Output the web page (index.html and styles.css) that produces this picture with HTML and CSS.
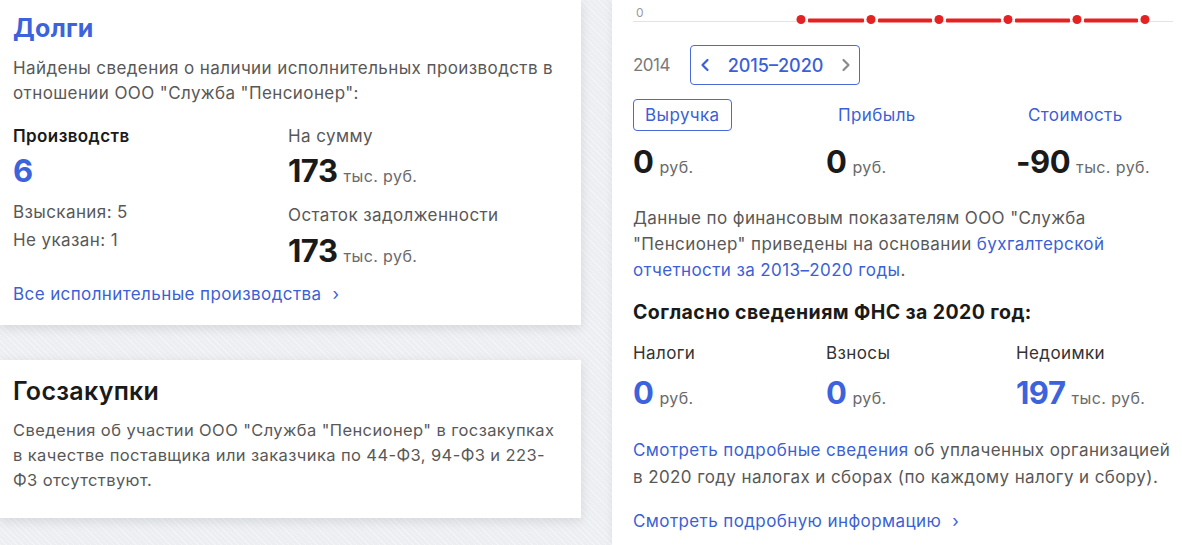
FILE: index.html
```html
<!DOCTYPE html>
<html>
<head>
    <title>Служба Пенсионер</title>
    <link rel="stylesheet" href="styles.css">
</head>
<body>
<div class="page">
    <div class="left">
        <section class="card debts">
            <h2 class="card-title blue">Долги</h2>
            <p class="text">Найдены сведения о наличии исполнительных производств в отношении ООО "Служба "Пенсионер":</p>
            <div class="stats">
                <div class="stat-col">
                    <div class="label bold">Производств</div>
                    <div class="value"><span class="num blue">6</span></div>
                    <div class="note first">Взыскания: 5</div>
                    <div class="note">Не указан: 1</div>
                </div>
                <div class="stat-col">
                    <div class="label">На сумму</div>
                    <div class="value"><span class="num">173</span><span class="unit">тыс. руб.</span></div>
                    <div class="label second">Остаток задолженности</div>
                    <div class="value tight"><span class="num">173</span><span class="unit">тыс. руб.</span></div>
                </div>
            </div>
            <a class="more" href="#">Все исполнительные производства <span class="chev">›</span></a>
        </section>

        <section class="card tenders">
            <h2 class="card-title">Госзакупки</h2>
            <p class="text small">Сведения об участии ООО "Служба "Пенсионер" в госзакупках в качестве поставщика или заказчика по 44-ФЗ, 94-ФЗ и 223-ФЗ отсутствуют.</p>
        </section>
    </div>

    <section class="panel">
        <svg class="chart" width="540" height="28" viewBox="0 0 540 28">
            <text x="3" y="17" font-size="12" fill="#9a9a9a" font-family="Inter, sans-serif">0</text>
            <line x1="0" y1="21.5" x2="540" y2="21.5" stroke="#e3e3e3" stroke-width="1"/>
            <g fill="#e52222">
                <rect x="175" y="18.5" width="56" height="4" rx="1"/>
                <rect x="245" y="18.5" width="54" height="4" rx="1"/>
                <rect x="313" y="18.5" width="55" height="4" rx="1"/>
                <rect x="382" y="18.5" width="55" height="4" rx="1"/>
                <rect x="451" y="18.5" width="54" height="4" rx="1"/>
                <circle cx="168" cy="19.5" r="4.5"/>
                <circle cx="238" cy="19.5" r="4.5"/>
                <circle cx="306" cy="19.5" r="4.5"/>
                <circle cx="375" cy="19.5" r="4.5"/>
                <circle cx="444" cy="19.5" r="4.5"/>
                <circle cx="512" cy="19.5" r="4.5"/>
            </g>
        </svg>

        <div class="years">
            <span class="year-prev">2014</span>
            <div class="year-box">
                <svg class="arrow" width="10" height="14" viewBox="0 0 10 14"><path d="M7.5 2 L2.5 7 L7.5 12" fill="none" stroke="#3c5fd6" stroke-width="2.2" stroke-linecap="round" stroke-linejoin="round"/></svg>
                <span class="year-range">2015–2020</span>
                <svg class="arrow" width="10" height="14" viewBox="0 0 10 14"><path d="M2.5 2 L7.5 7 L2.5 12" fill="none" stroke="#8a8a8a" stroke-width="2.2" stroke-linecap="round" stroke-linejoin="round"/></svg>
            </div>
        </div>

        <div class="grid3 tabs">
            <div><span class="tab active">Выручка</span></div>
            <div><span class="tab">Прибыль</span></div>
            <div><span class="tab">Стоимость</span></div>
        </div>

        <div class="grid3 values">
            <div class="value"><span class="num">0</span><span class="unit">руб.</span></div>
            <div class="value"><span class="num">0</span><span class="unit">руб.</span></div>
            <div class="value"><span class="num">-90</span><span class="unit">тыс. руб.</span></div>
        </div>

        <p class="text fin">Данные по финансовым показателям ООО "Служба "Пенсионер" приведены на основании <a href="#">бухгалтерской отчетности за 2013–2020 годы</a>.</p>

        <h3 class="fns">Согласно сведениям ФНС за 2020 год:</h3>

        <div class="grid3 fns-labels">
            <div>Налоги</div>
            <div>Взносы</div>
            <div>Недоимки</div>
        </div>
        <div class="grid3 values fns-values">
            <div class="value"><span class="num blue">0</span><span class="unit">руб.</span></div>
            <div class="value"><span class="num blue">0</span><span class="unit">руб.</span></div>
            <div class="value"><span class="num blue">197</span><span class="unit">тыс. руб.</span></div>
        </div>

        <p class="text taxes"><a href="#">Смотреть подробные сведения</a> об уплаченных организацией в 2020 году налогах и сборах (по каждому налогу и сбору).</p>

        <a class="more panel-more" href="#">Смотреть подробную информацию <span class="chev">›</span></a>
    </section>
</div>
</body>
</html>
```

FILE: styles.css
```css
body {
    margin: 0;
    font-family: Inter, "Noto Sans", sans-serif;
    letter-spacing: 0.4px;
    color: #1a1a1a;
    background-color: #eceef1;
    background-image: repeating-linear-gradient(45deg, rgba(255,255,255,0.35) 0 1px, transparent 1px 4px);
    overflow: hidden;
}

a {
    color: #3c5fd6;
    text-decoration: none;
}

.blue {
    color: #3c63db;
}

.bold {
    font-weight: 600;
}

.page {
    display: flex;
    gap: 31px;
    height: 545px;
}

.left {
    width: 581px;
    flex-shrink: 0;
    display: flex;
    flex-direction: column;
    gap: 35px;
}

.card {
    background: #fff;
    box-shadow: 0 3px 10px rgba(40, 50, 70, 0.13);
    padding: 13px 13px 19px;
}

.card-title {
    margin: 0;
    font-size: 25px;
    line-height: 30px;
    font-weight: 600;
    letter-spacing: 0.3px;
}

.debts .card-title {
    font-weight: 700;
}

.text {
    margin: 12.5px 0 0;
    font-size: 17px;
    line-height: 25px;
    color: #585858;
}

.text.small {
    font-size: 16.5px;
}

.stats {
    display: grid;
    grid-template-columns: 275px 1fr;
    margin-top: 18.5px;
}

.label, .note {
    font-size: 17px;
    line-height: 24px;
    color: #585858;
}

.label.bold {
    color: #1a1a1a;
}

.value {
    margin-top: 5px;
    height: 36px;
    font-size: 31px;
    line-height: 36px;
    white-space: nowrap;
}

.num {
    font-size: 31px;
    font-weight: 700;
    letter-spacing: -0.5px;
    line-height: 1;
}

.unit {
    margin-left: 6px;
    font-size: 16px;
    line-height: 1;
    color: #6a6a6a;
}

.note.first {
    margin-top: 11px;
}

.note {
    margin-top: 4px;
}

.label.second {
    margin-top: 14px;
}

.value.tight {
    margin-top: 6px;
}

.more {
    display: inline-block;
    margin-top: 13px;
    font-size: 17px;
    line-height: 24px;
}

.chev {
    margin-left: 6px;
}

.tenders {
    padding: 16px 18px 25px 13px;
}

.tenders .text {
    margin-top: 11.5px;
}

.panel {
    flex: 1;
    background: #fff;
    box-shadow: 0 0 8px rgba(40, 50, 70, 0.08);
    padding: 0 12px 0 21px;
}

.chart {
    display: block;
}

.years {
    display: flex;
    align-items: center;
    margin-top: 17px;
    height: 40px;
}

.year-prev {
    font-size: 17px;
    color: #7a7a7a;
    letter-spacing: -0.5px;
    width: 57px;
}

.year-box {
    box-sizing: border-box;
    width: 170px;
    height: 40px;
    border: 1.5px solid #4a6ad8;
    border-radius: 4px;
    display: flex;
    align-items: center;
    justify-content: space-between;
    padding: 0 8px 0 9px;
}

.year-range {
    font-size: 18px;
    color: #3c5fd6;
    font-weight: 500;
    letter-spacing: 0;
}

.arrow {
    display: block;
}

.grid3 {
    display: grid;
    grid-template-columns: 193px 190px 1fr;
}

.tabs {
    margin-top: 14px;
}

.tab {
    display: inline-block;
    box-sizing: border-box;
    height: 32px;
    line-height: 30px;
    padding: 0 11px;
    border: 1px solid transparent;
    border-radius: 4px;
    font-size: 17px;
    color: #3c5fd6;
}

.tab.active {
    border-color: #4a6ad8;
}

.values {
    margin-top: 8px;
}

.fin {
    margin-top: 25px;
    line-height: 26px;
}

.fns {
    margin: 16px 0 0;
    font-size: 19.5px;
    line-height: 26px;
    font-weight: 700;
}

.fns-labels {
    margin-top: 16px;
    font-size: 17px;
    line-height: 24px;
    color: #333;
}

.fns-values {
    margin-top: 5px;
}

.taxes {
    margin-top: 26px;
    line-height: 27px;
}

.panel-more {
    margin-top: 17.5px;
}
```
